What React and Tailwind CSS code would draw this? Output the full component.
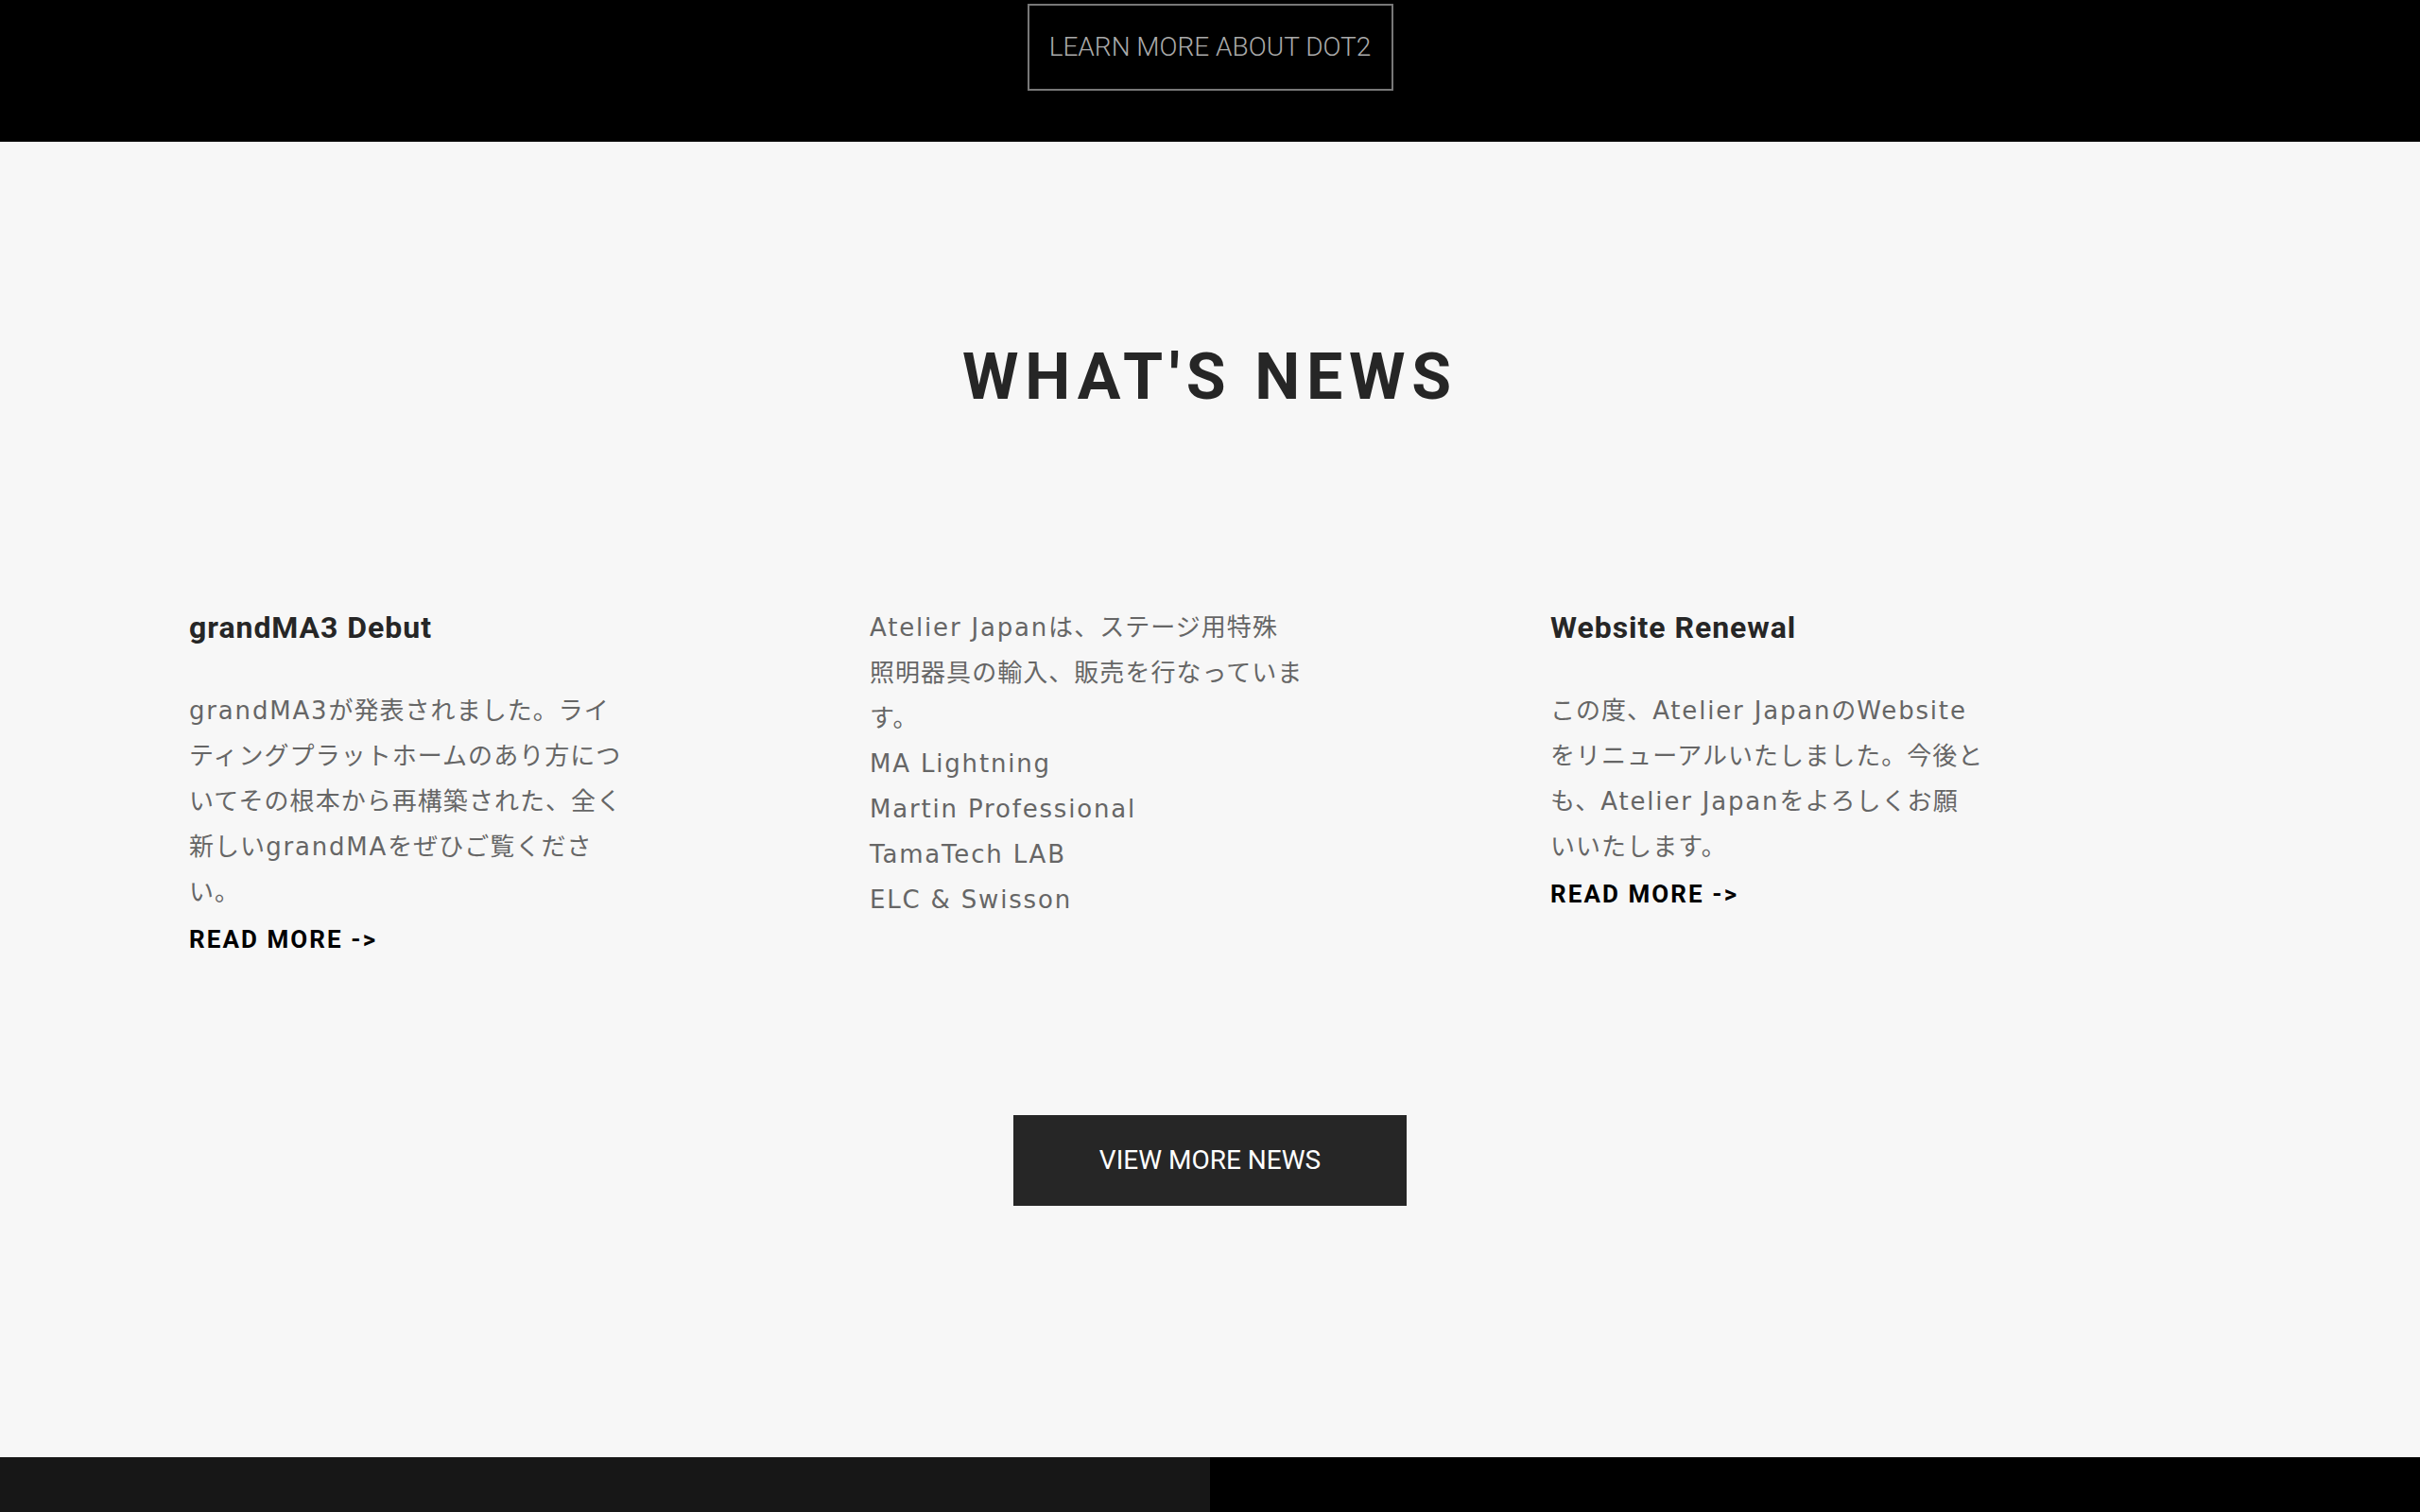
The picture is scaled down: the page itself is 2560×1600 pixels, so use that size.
import React from 'react';

const sans = "font-['Roboto','Liberation_Sans',sans-serif]";
const jp = "font-['DejaVu_Sans','Noto_Sans_CJK_JP',sans-serif]";

const news = [
  {
    title: 'grandMA3 Debut',
    lines: [
      'grandMA3が発表されました。ライ',
      'ティングプラットホームのあり方につ',
      'いてその根本から再構築された、全く',
      '新しいgrandMAをぜひご覧くださ',
      'い。',
    ],
    more: true,
  },
  {
    title: null,
    lines: [
      'Atelier Japanは、ステージ用特殊',
      '照明器具の輸入、販売を行なっていま',
      'す。',
      'MA Lightning',
      'Martin Professional',
      'TamaTech LAB',
      'ELC & Swisson',
    ],
    more: false,
  },
  {
    title: 'Website Renewal',
    lines: [
      'この度、Atelier JapanのWebsite',
      'をリニューアルいたしました。今後と',
      'も、Atelier Japanをよろしくお願',
      'いいたします。',
    ],
    more: true,
  },
];

// latin runs sit a little wider than the kana in the original
function Line({ text }) {
  return text.split(/([\x20-\x7e]+)/).map((part, i) =>
    /^[\x20-\x7e]+$/.test(part) ? (
      <span key={i} className="tracking-[0.07em]">{part}</span>
    ) : (
      part
    )
  );
}

export default function App() {
  return (
    <div className="min-h-screen bg-[#f7f7f7]">
      {/* dot2 band */}
      <div className="bg-black pt-[4px] pb-[54px] flex justify-center">
        <a className={`${sans} w-[387px] h-[92px] border-2 border-[#777] flex items-center justify-center text-[28px] font-light text-[#aaa]`}>
          LEARN MORE ABOUT DOT2
        </a>
      </div>

      {/* news */}
      <section className="pt-[215px] pb-[266px]">
        <h2 className={`${sans} text-center text-[68px] leading-none font-bold tracking-[0.1em] text-[#262626]`}>
          WHAT'S NEWS
        </h2>

        <div className="mx-auto w-[2160px] mt-[207px] grid grid-cols-3">
          {news.map((n, i) => (
            <div key={i} className="w-[500px]">
              {n.title && (
                <h3 className={`${sans} text-[32px] leading-[48px] font-bold tracking-[0.03em] text-[#262626] mb-10`}>{n.title}</h3>
              )}
              <p className={`${jp} text-[26px] leading-[48px] tracking-[0.04em] text-[#666] whitespace-nowrap`}>
                {n.lines.map((l, j) => (
                  <React.Fragment key={j}>
                    <Line text={l} />
                    {j < n.lines.length - 1 && <br />}
                  </React.Fragment>
                ))}
              </p>
              {n.more && (
                <a className={`${sans} block text-[26px] leading-[52px] font-bold tracking-[0.08em] text-black`}>READ MORE -&gt;</a>
              )}
            </div>
          ))}
        </div>

        <div className="flex justify-center mt-[160px]">
          <a className={`${sans} w-[416px] h-[96px] bg-[#262626] flex items-center justify-center text-[28px] text-white`}>
            VIEW MORE NEWS
          </a>
        </div>
      </section>

      {/* footer halves */}
      <div className="grid grid-cols-2 h-[58px]">
        <div className="bg-[#171717]" />
        <div className="bg-black" />
      </div>
    </div>
  );
}
